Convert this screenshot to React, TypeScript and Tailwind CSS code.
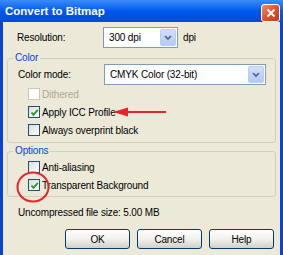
import React from "react";

const font = { fontFamily: '"Liberation Sans", Arial, sans-serif' };

function Check({ checked, disabled }: { checked?: boolean; disabled?: boolean }) {
  return (
    <div
      className={
        "w-[12px] h-[12px] border flex items-center justify-center " +
        (disabled
          ? "border-[#CAC8BB] bg-white"
          : "border-[#1C5180] bg-gradient-to-br from-[#DCDCD7] to-white")
      }
    >
      {checked && (
        <svg width="9" height="9" viewBox="0 0 9 9">
          <path d="M1.5 4.5 L3.5 6.8 L7.8 1.8" fill="none" stroke="#21A121" strokeWidth="1.9" />
        </svg>
      )}
    </div>
  );
}

function Row({ checked, disabled, label }: { checked?: boolean; disabled?: boolean; label: string }) {
  return (
    <div className="h-[18px] flex items-center pl-[20px]">
      <Check checked={checked} disabled={disabled} />
      <span className={"ml-[2px] " + (disabled ? "text-[#ACA899]" : "text-black")}>{label}</span>
    </div>
  );
}

function Select({ value, w }: { value: string; w: string }) {
  return (
    <div className={"h-[21px] border border-[#7F9DB9] bg-white flex items-center p-[1px] " + w}>
      <span className="flex-1 pl-[4px] text-black">{value}</span>
      <div className="w-[16px] h-full rounded-[2px] bg-gradient-to-b from-[#D3E0FD] to-[#B4C8F6] border border-[#B9CDF9] flex items-center justify-center">
        <svg width="8" height="6" viewBox="0 0 8 6">
          <path d="M1 1 L4 4 L7 1" fill="none" stroke="#4D6185" strokeWidth="1.6" />
        </svg>
      </div>
    </div>
  );
}

function Btn({ label }: { label: string }) {
  return (
    <div className="w-[65px] h-[20px] rounded-[3px] border border-[#003C74] bg-gradient-to-b from-white via-[#F2F1EC] to-[#D6D0C5] flex items-center justify-center text-black">
      {label}
    </div>
  );
}

export default function App() {
  return (
    <div className="w-[283px] h-[255px] flex flex-col text-[10px] tracking-[-0.15px] leading-[13px] relative overflow-hidden" style={font}>
      <div className="h-[22px] bg-gradient-to-b from-[#3A8CF6] via-[#0058EE] to-[#0048D8] flex items-center justify-between pl-[5px] pr-[3px]">
        <span className="text-white font-bold text-[11.5px] tracking-normal">Convert to Bitmap</span>
        <div className="w-[19px] h-[18px] mt-[3px] rounded-[3px] border border-white bg-gradient-to-br from-[#F08A68] via-[#E0532D] to-[#C23A18] flex items-center justify-center">
          <svg width="10" height="10" viewBox="0 0 10 10">
            <path d="M1.5 1.5 L8.5 8.5 M8.5 1.5 L1.5 8.5" stroke="white" strokeWidth="2" />
          </svg>
        </div>
      </div>
      <div className="flex-1 flex flex-col bg-[#ECE9D8] border-x-[3px] border-l-[#0842D6] border-r-[#0842D6] px-[4px]">
        <div className="mt-[5px] flex items-center">
          <span className="w-[96px] pl-[10px] text-black">Resolution:</span>
          <Select value="300 dpi" w="w-[75px]" />
          <span className="ml-[5px] text-black">dpi</span>
        </div>
        <fieldset className="mt-[4px] border border-[#D0D0BF] rounded-[3px] pb-[3px]">
          <legend className="ml-[5px] px-[2px] text-[#0046D5] leading-[12px]">Color</legend>
          <div className="flex items-center">
            <span className="w-[96px] pl-[10px] text-black">Color mode:</span>
            <Select value="CMYK Color (32-bit)" w="w-[162px]" />
          </div>
          <Row disabled label="Dithered" />
          <Row checked label="Apply ICC Profile" />
          <Row label="Always overprint black" />
        </fieldset>
        <fieldset className="mt-[2px] border border-[#D0D0BF] rounded-[3px] pt-[1px] pb-[2px]">
          <legend className="ml-[5px] px-[2px] text-[#0046D5] leading-[12px]">Options</legend>
          <Row label="Anti-aliasing" />
          <Row checked label="Transparent Background" />
        </fieldset>
        <div className="mt-[8px] h-[14px] flex items-center pl-[11px] text-black">Uncompressed file size: 5.00 MB</div>
        <div className="mt-[10px] flex justify-end gap-[7px] pr-[2px]">
          <Btn label="OK" />
          <Btn label="Cancel" />
          <Btn label="Help" />
        </div>
      </div>
      <svg className="absolute left-0 top-0 pointer-events-none" width="283" height="255">
        <line x1="166" y1="112" x2="124" y2="112" stroke="#E3242B" strokeWidth="2.2" />
        <path d="M113 112 L128 107.5 L128 116.5 Z" fill="#E3242B" />
        <ellipse cx="33" cy="187" rx="15.5" ry="14.5" fill="none" stroke="#E3242B" strokeWidth="2" />
      </svg>
    </div>
  );
}
